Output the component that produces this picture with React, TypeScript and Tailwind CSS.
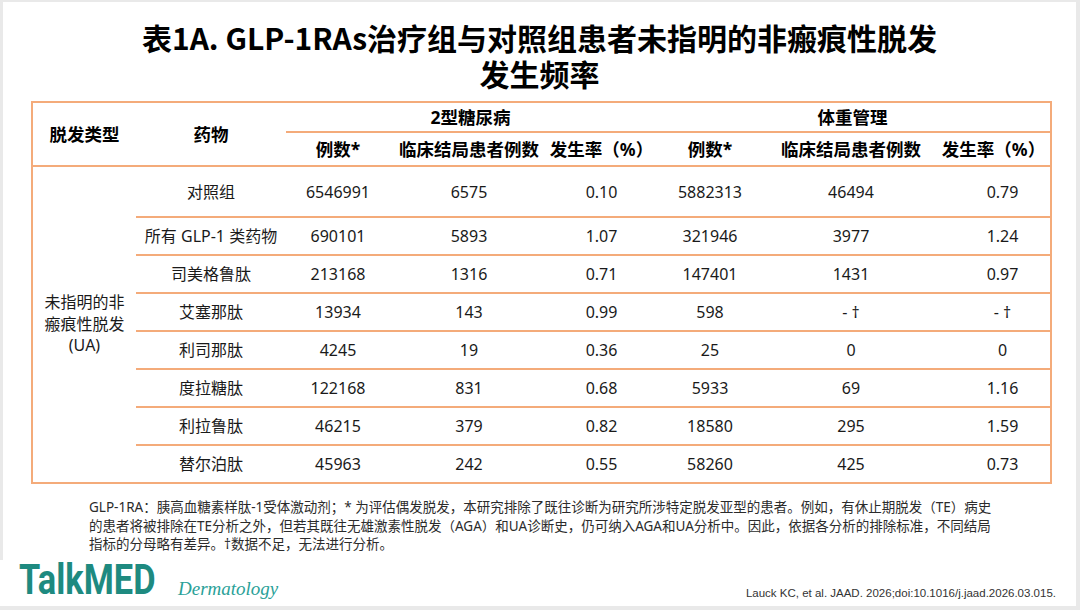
const rows = [
  ["对照组", "6546991", "6575", "0.10", "5882313", "46494", "0.79"],
  ["所有 GLP-1 类药物", "690101", "5893", "1.07", "321946", "3977", "1.24"],
  ["司美格鲁肽", "213168", "1316", "0.71", "147401", "1431", "0.97"],
  ["艾塞那肽", "13934", "143", "0.99", "598", "- †", "- †"],
  ["利司那肽", "4245", "19", "0.36", "25", "0", "0"],
  ["度拉糖肽", "122168", "831", "0.68", "5933", "69", "1.16"],
  ["利拉鲁肽", "46215", "379", "0.82", "18580", "295", "1.59"],
  ["替尔泊肽", "45963", "242", "0.55", "58260", "425", "0.73"],
];

const subHeads = ["例数*", "临床结局患者例数", "发生率（%）", "例数*", "临床结局患者例数", "发生率（%）"];

export default function App() {
  return (
    <div
      className="w-[1080px] h-[610px] bg-[#e9e9e9] pt-[2px] pr-[4px] pb-[4px] flex flex-col overflow-hidden"
      style={{ fontFamily: '"Noto Sans", "Noto Sans CJK SC", sans-serif' }}
    >
      {/* slide body */}
      <div className="ml-[3px] h-[558px] bg-white flex flex-col">
        <h1
          className="pt-[17px] text-center text-[30px] leading-[36px] font-bold text-black"
          style={{ fontFamily: '"Noto Sans CJK SC", sans-serif' }}
        >
          <div>表1A. GLP-1RAs治疗组与对照组患者未指明的非瘢痕性脱发</div>
          <div>发生频率</div>
        </h1>

        {/* table */}
        <div className="mt-[10px] ml-[28px] w-[1021px] border-2 border-[#f4ab7a]">
          <div className="grid grid-cols-[103px_150px_104px_158px_107px_110px_172px_113px] grid-rows-[30px_34px_51px_38px_38px_38px_38px_38px_38px_36px] text-[16px] text-[#1a1a1a]">
            <div className="row-span-2 flex items-center justify-center border-b-2 border-[#f4ab7a] text-[17.5px] font-bold text-black">
              脱发类型
            </div>
            <div className="row-span-2 flex items-center justify-center border-b-2 border-[#f4ab7a] text-[17.5px] font-bold text-black">
              药物
            </div>
            <div className="col-span-3 flex items-center justify-center border-b-2 border-[#f4ab7a] text-[17.5px] font-bold text-black">
              2型糖尿病
            </div>
            <div className="col-span-3 flex items-center justify-center border-b-2 border-[#f4ab7a] text-[17.5px] font-bold text-black">
              体重管理
            </div>
            {subHeads.map((h, i) => (
              <div
                key={i}
                className="flex items-center justify-center whitespace-nowrap border-b-2 border-[#f4ab7a] text-[17.5px] font-bold text-black"
              >
                {h}
              </div>
            ))}

            <div className="row-span-8 flex items-center justify-center text-center leading-[21.5px]">
              未指明的非
              <br />
              瘢痕性脱发
              <br />
              (UA)
            </div>
            {rows.map((r, ri) =>
              r.map((c, ci) => (
                <div
                  key={`${ri}-${ci}`}
                  className={`flex items-center justify-center whitespace-nowrap ${
                    ri < rows.length - 1 ? "border-b-2 border-[#f4ab7a]" : ""
                  } ${ci === 6 ? "pl-[18px]" : ""}`}
                >
                  {c}
                </div>
              ))
            )}
          </div>
        </div>

        {/* footnote */}
        <div className="mt-[14px] pl-[86px] text-[13.5px] leading-[18.5px] text-[#2b2b2b] whitespace-nowrap">
          <div>GLP-1RA：胰高血糖素样肽-1受体激动剂；* 为评估偶发脱发，本研究排除了既往诊断为研究所涉特定脱发亚型的患者。例如，有休止期脱发（TE）病史</div>
          <div>的患者将被排除在TE分析之外，但若其既往无雄激素性脱发（AGA）和UA诊断史，仍可纳入AGA和UA分析中。因此，依据各分析的排除标准，不同结局</div>
          <div>指标的分母略有差异。†数据不足，无法进行分析。</div>
        </div>
      </div>

      {/* footer strip */}
      <div className="h-[46px] bg-white flex items-end pb-[6px] pl-[19px] pr-[20px]">
        <div
          className="text-[43px] leading-none font-bold text-[#1e8a80] scale-x-[0.8] origin-left w-[134px] -mb-[1px]"
          style={{ fontFamily: "Roboto, sans-serif" }}
        >
          TalkMED
        </div>
        <div
          className="ml-[25px] mb-[2px] text-[19px] italic leading-none text-[#2aa198]"
          style={{ fontFamily: '"Liberation Serif", serif' }}
        >
          Dermatology
        </div>
        <div
          className="ml-auto mb-[1px] text-[11.5px] leading-none text-[#333]"
          style={{ fontFamily: '"Liberation Sans", sans-serif' }}
        >
          Lauck KC, et al. JAAD. 2026;doi:10.1016/j.jaad.2026.03.015.
        </div>
      </div>
    </div>
  );
}
